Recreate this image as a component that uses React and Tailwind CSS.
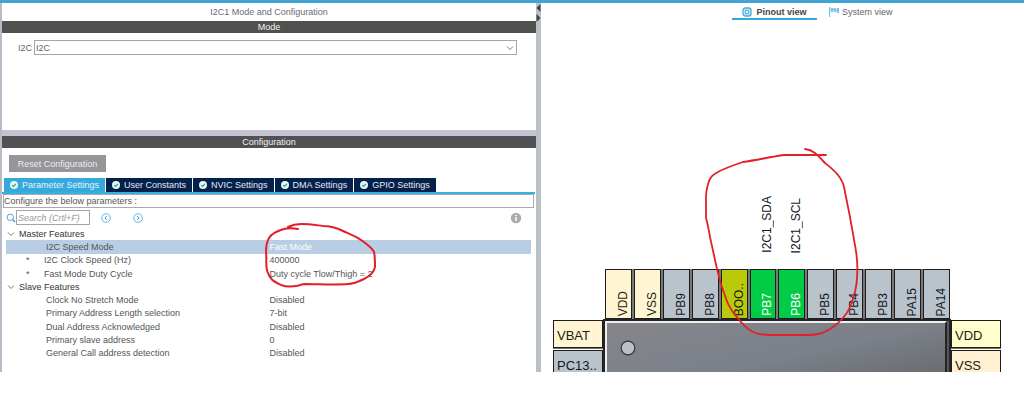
import React from "react";

const tabs = ["Parameter Settings", "User Constants", "NVIC Settings", "DMA Settings", "GPIO Settings"];

const groups = [
  {
    name: "Master Features",
    rows: [
      { label: "I2C Speed Mode", value: "Fast Mode", selected: true },
      { label: "I2C Clock Speed (Hz)", value: "400000", changed: true },
      { label: "Fast Mode Duty Cycle", value: "Duty cycle Tlow/Thigh = 2", changed: true },
    ],
  },
  {
    name: "Slave Features",
    rows: [
      { label: "Clock No Stretch Mode", value: "Disabled" },
      { label: "Primary Address Length selection", value: "7-bit" },
      { label: "Dual Address Acknowledged", value: "Disabled" },
      { label: "Primary slave address", value: "0" },
      { label: "General Call address detection", value: "Disabled" },
    ],
  },
];

const power = "bg-[#fff5d2] text-[#1c1c14]";
const io = "bg-[#b9c3cc] text-[#15181c]";
const active = "bg-[#02cc45] text-white";

const topPins = [
  { name: "VDD", tone: power },
  { name: "VSS", tone: power },
  { name: "PB9", tone: io },
  { name: "PB8", tone: io },
  { name: "BOO..", tone: "bg-[#b9cb08] text-[#15181c]" },
  { name: "PB7", tone: active, signal: "I2C1_SDA" },
  { name: "PB6", tone: active, signal: "I2C1_SCL" },
  { name: "PB5", tone: io },
  { name: "PB4", tone: io },
  { name: "PB3", tone: io },
  { name: "PA15", tone: io },
  { name: "PA14", tone: io },
];

function CheckDot() {
  return (
    <svg viewBox="0 0 8 8" className="h-2 w-2 shrink-0" aria-hidden="true">
      <circle cx="4" cy="4" r="4" fill="#e4f7f2" />
      <path d="M2.2 4.1 3.5 5.4 5.9 2.8" fill="none" stroke="#2f9a78" strokeWidth="1.1" />
    </svg>
  );
}

function Chevron({ className }) {
  return (
    <svg viewBox="0 0 8 8" className={className} aria-hidden="true">
      <path d="M1 2.5 4 5.5 7 2.5" fill="none" stroke="#777" strokeWidth="1" />
    </svg>
  );
}

function StepIcon({ d }) {
  return (
    <svg viewBox="0 0 10 10" className="h-2.5 w-2.5" aria-hidden="true">
      <circle cx="5" cy="5" r="4.3" fill="none" stroke="#4fb3e0" strokeWidth="0.9" />
      <path d={d} fill="none" stroke="#3a93c4" strokeWidth="1" />
    </svg>
  );
}

function SectionBar({ children, className }) {
  return <h2 className={`flex h-3 items-center justify-center text-[9px] text-[#f0f0f0] ${className}`}>{children}</h2>;
}

function ModePanel() {
  return (
    <section className="h-[109px] bg-white">
      <SectionBar className="bg-[#50524f]">Mode</SectionBar>
      <div className="flex items-center pt-[7px] pr-[19px] pl-4">
        <label htmlFor="mode" className="w-4 text-[#666]">I2C</label>
        <div className="relative flex-1">
          <select id="mode" className="block h-[15px] w-full appearance-none border border-[#a5a5a5] bg-white px-px text-[#666] outline-none">
            <option>I2C</option>
          </select>
          <Chevron className="pointer-events-none absolute top-1 right-[3px] h-2 w-2" />
        </div>
      </div>
    </section>
  );
}

function ParameterTable() {
  return (
    <div className="relative mr-[5px] ml-1">
      <table className="h-[133px] w-full table-fixed border-collapse text-left text-[#555]">
        <tbody>
          {groups.map((group) => (
            <React.Fragment key={group.name}>
              <tr>
                <th colSpan={2} scope="rowgroup" className="p-0 font-normal text-[#333]">
                  <div className="flex items-center gap-1 pl-px">
                    <Chevron className="h-2 w-2" />
                    {group.name}
                  </div>
                </th>
              </tr>
              {group.rows.map((row) => (
                <tr key={row.label} className={row.selected ? "bg-[#b9cde5]" : ""}>
                  <th scope="row" className="p-0 font-normal">
                    <div className="flex">
                      <span className={row.changed ? "w-[38px] pl-5" : "w-10 pl-5"}>{row.changed ? "*" : ""}</span>
                      {row.label}
                    </div>
                  </th>
                  <td className={row.selected ? "p-0 pl-px text-white" : "p-0 pl-px"}>{row.value}</td>
                </tr>
              ))}
            </React.Fragment>
          ))}
        </tbody>
      </table>
      <svg viewBox="264 222 112 66" className="pointer-events-none absolute -top-[5px] left-1/2 -ml-1 h-[66px] w-28" aria-hidden="true">
        <path
          d="M297 229C292 228 287 228 283 229C276 231 271 233 268 238C265 243 265 247 265 251C266 260 264 267 267 273C269 280 274 282 280 285C285 287 294 287 303 284C318 284 334 285 347 284C353 284 359 281 363 279C369 276 373 272 374 267C374 262 374 256 373 252C371 248 368 246 363 242C354 235 348 234 342 231C336 228 330 226 322 226C314 225 309 224 300 224C294 224 291 225 287 227"
          fill="none" stroke="#e32028" strokeWidth="2" strokeLinecap="round"
        />
      </svg>
    </div>
  );
}

function ConfigurationPanel() {
  return (
    <section className="bg-white pb-3">
      <SectionBar className="bg-[#515154]">Configuration</SectionBar>
      <div className="pt-[7px] pl-[7px]">
        <button className="block h-[17px] w-[97px] bg-[#969599] text-center text-[#ececee]">Reset Configuration</button>
      </div>
      <div role="tablist" className="mt-1.5 ml-0.5 flex gap-px">
        {tabs.map((tab, i) => (
          <button
            key={tab}
            role="tab"
            aria-selected={i === 0}
            className={`flex h-3.5 items-center gap-1 px-1.5 ${i === 0 ? "bg-[#35a9dc] text-[#e3f5fd]" : "bg-[#04214c] text-[#e4e9f0]"}`}
          >
            <CheckDot />
            {tab}
          </button>
        ))}
      </div>
      <div className="mr-px h-0.5 bg-[#35b1df]" />
      <p className="mr-0.5 ml-px h-3.5 border border-[#aaa] leading-3 text-[#555]">Configure the below parameters :</p>
      <div className="mt-0.5 flex h-[15px] items-center pr-[14px] pl-1">
        <svg viewBox="0 0 10 10" className="h-2.5 w-2.5" aria-hidden="true">
          <circle cx="4.3" cy="4.3" r="3.2" fill="none" stroke="#4aa9cf" />
          <path d="M6.7 6.7 9 9" stroke="#3193bd" strokeWidth="1.2" />
        </svg>
        <input type="text" aria-label="Search parameters" placeholder="Search (Crtl+F)" className="h-[15px] w-[74px] border border-[#a5a5a5] px-px italic outline-none placeholder:text-[#999]" />
        <button aria-label="Previous match" className="ml-[11px]">
          <StepIcon d="M5.8 3 4 5 5.8 7" />
        </button>
        <button aria-label="Next match" className="ml-[22px]">
          <StepIcon d="M4.2 3 6 5 4.2 7" />
        </button>
        <svg viewBox="0 0 12 12" className="ml-auto h-3 w-3" aria-hidden="true">
          <circle cx="6" cy="6" r="5.2" fill="#ababab" />
          <path d="M6 5v4M6 2.8v1.2" stroke="#fff" strokeWidth="1.5" />
        </svg>
      </div>
      <div className="pt-0.5">
        <ParameterTable />
      </div>
    </section>
  );
}

function SidePin({ name, tone }) {
  return <div className={`h-7 shrink-0 border border-[#1d1d1d] pt-[9px] pl-[3px] text-[13px] leading-3 shadow-[0_1px_0_#77756a] ${tone}`}>{name}</div>;
}

function Pinout() {
  return (
    <div className="relative ml-3 w-[448px]">
      <div className="mr-[51px] ml-[52px] grid h-[234px] grid-cols-12 gap-0.5">
        {topPins.map((pin) => (
          <div key={pin.name} className="flex items-end justify-end pr-px text-[12px] leading-4 text-[#15151c]">
            <span className="rotate-180 [writing-mode:vertical-rl]">{pin.signal}</span>
          </div>
        ))}
      </div>
      <div className="mt-4 mr-[51px] ml-[52px] grid h-[50px] grid-cols-12 gap-0.5 bg-[#79797a]">
        {topPins.map((pin) => (
          <div key={pin.name} className={`flex items-end justify-end border border-[#1d1d1d] pb-0.5 text-[12px] leading-4 ${pin.tone}`}>
            <span className="rotate-180 [writing-mode:vertical-rl]">{pin.name}</span>
          </div>
        ))}
      </div>
      <div className="flex h-[53px] overflow-hidden">
        <div className="flex w-[50px] flex-col gap-0.5 pt-px">
          <SidePin name="VBAT" tone={power} />
          <SidePin name="PC13.." tone={io} />
        </div>
        <div className="h-20 flex-1 border-2 border-[#242427] bg-[#55575a] pr-0.5">
          <div className="h-full border-t-2 border-r-2 border-l-2 border-t-[#eeeeef] border-r-[#242427] border-l-[#eeeeef] bg-linear-to-br from-[#85868b] via-[#7b8089] to-[#626565] pt-[17px] pl-[13px]">
            <svg viewBox="0 0 16 16" className="h-4 w-4" aria-hidden="true">
              <circle cx="8" cy="8" r="6.8" fill="#b9c0c9" stroke="#303338" strokeWidth="1.2" />
            </svg>
          </div>
        </div>
        <div className="flex w-[50px] flex-col gap-0.5 pt-px">
          <SidePin name="VDD" tone="bg-[#ffffce] text-[#1c1c14]" />
          <SidePin name="VSS" tone="bg-[#fff0d2] text-[#1c1c14]" />
        </div>
      </div>
      <svg viewBox="700 145 160 195" className="pointer-events-none absolute top-[126px] left-[147px] h-[195px] w-40" aria-hidden="true">
        <path
          d="M826 155H784C770 157 757 160 743 162C734 165 725 168 718 172C712 175 711 177 709 181C707 187 706 191 706 197V218C708 225 709 231 710 237L717 269C719 276 720 282 722 287C726 299 729 309 737 317C742 324 747 329 753 332C759 335 764 335 770 335H808C820 335 826 332 833 327C841 321 847 314 850 307C854 297 857 287 857 277C858 266 857 254 854 240C853 232 851 224 850 217L844 187C843 182 841 179 838 175C834 170 830 167 825 163C820 158 815 150 805 149"
          fill="none" stroke="#e32028" strokeWidth="1.8" strokeLinecap="round"
        />
      </svg>
    </div>
  );
}

function PinoutPane() {
  return (
    <main className="min-w-0 overflow-hidden bg-white">
      <nav className="flex h-4 pl-[191px] text-[#666]">
        <button aria-pressed="true" className="flex h-[17px] w-[85px] items-center justify-center gap-1 border-b-2 border-[#35a9dc] pt-0.5 font-bold text-[#444]">
          <svg viewBox="0 0 10 10" className="h-2.5 w-2.5" aria-hidden="true">
            <rect x="1" y="1" width="8" height="8" rx="2" fill="#bfe3f5" stroke="#4aaedb" strokeWidth="1.3" />
            <rect x="3.4" y="3.4" width="3.2" height="3.2" rx="0.6" fill="#fff" stroke="#4aaedb" />
          </svg>
          Pinout view
        </button>
        <button className="ml-3 flex h-[17px] items-center gap-[3px]">
          <svg viewBox="0 0 10 10" className="h-2.5 w-2.5" aria-hidden="true">
            <path d="M0 0h1.2v10H0zM1.8 1h2.4v4H1.8zM5 1h2v4H5zM7.8 1H10v5H7.8z" fill="#7cc3e6" />
            <path d="M4.2 2H5v1h-.8zM7 3h.8v1H7z" fill="#4aaedb" />
          </svg>
          System view
        </button>
      </nav>
      <Pinout />
    </main>
  );
}

export default function App() {
  return (
    <div className="min-h-screen bg-white font-['Liberation_Sans',Arial,sans-serif] text-[9px] leading-3">
      <div className="grid grid-cols-[541fr_483fr] border-t-[3px] border-[#42a4d4]">
        <div className="flex min-w-0 border-l-2 border-[#b9bac6]">
          <div className="min-w-0 flex-1 bg-[#c5c3d3]">
            <h1 className="h-[18px] bg-white text-center leading-[18px] text-[#666b78]">I2C1 Mode and Configuration</h1>
            <ModePanel />
            <div className="h-1.5" />
            <ConfigurationPanel />
          </div>
          <div className="w-[5px] bg-[#b9c1c6]">
            <svg viewBox="0 0 5 20" className="h-5 w-[5px]" aria-hidden="true">
              <path d="M4.5 1v8L0.5 5zM0.5 11v8L4.5 15z" fill="#3f4148" />
            </svg>
          </div>
        </div>
        <PinoutPane />
      </div>
    </div>
  );
}
